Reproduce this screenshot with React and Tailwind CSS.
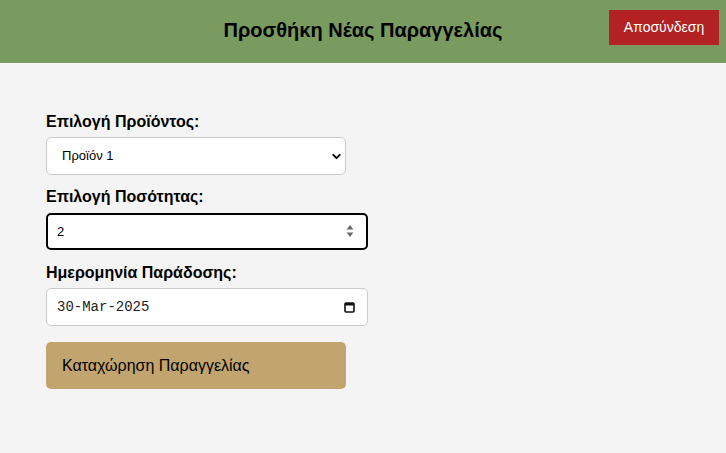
import React, { useState } from "react"
import { ChevronDown } from "lucide-react"

const font = { fontFamily: '"Liberation Sans", Arial, sans-serif' }

const App = () => {
  const [product, setProduct] = useState("1")
  const [qty, setQty] = useState("2")

  return (
    <div className="min-h-screen bg-[#f4f4f4] text-black" style={font}>
      <header className="grid h-[63px] grid-cols-[1fr_auto_1fr] items-start bg-[#7a9b5f]">
        <div />
        <h1 className="mt-[18px] text-[20px] font-bold leading-[24px]">Προσθήκη Νέας Παραγγελίας</h1>
        <div className="flex justify-end pr-[7px] pt-[10px]">
          <button className="h-[35px] w-[110px] bg-[#b22222] text-[14px] text-white">Αποσύνδεση</button>
        </div>
      </header>

      <form className="flex flex-col pl-[46px] pt-[50px]" onSubmit={(e) => e.preventDefault()}>
        <label className="text-[16px] font-bold leading-[18px]">Επιλογή Προϊόντος:</label>
        <div className="relative mt-[6px] w-[300px]">
          <select
            value={product}
            onChange={(e) => setProduct(e.target.value)}
            className="h-[38px] w-full appearance-none rounded-[5px] border border-[#cccccc] bg-white pl-[15px] text-[13px]"
          >
            <option value="1">Προϊόν 1</option>
            <option value="2">Προϊόν 2</option>
            <option value="3">Προϊόν 3</option>
          </select>
          <ChevronDown className="pointer-events-none absolute right-[3px] top-[13px] h-[13px] w-[13px]" strokeWidth={3.5} />
        </div>

        <label className="mt-[13px] text-[16px] font-bold leading-[18px]">Επιλογή Ποσότητας:</label>
        <div className="relative mt-[7px] w-[322px]">
          <input
            type="text"
            value={qty}
            onChange={(e) => setQty(e.target.value)}
            className="h-[37px] w-full rounded-[5px] border-2 border-black bg-white pl-[9px] text-[13px] outline-none"
          />
          <svg className="pointer-events-none absolute right-[14px] top-[11px]" width="8" height="14" viewBox="0 0 8 14">
            <path d="M4 1 L7.5 5.5 H0.5 Z" fill="#6b6b6b" />
            <path d="M4 13 L7.5 8.5 H0.5 Z" fill="#6b6b6b" />
          </svg>
        </div>

        <label className="mt-[14px] text-[16px] font-bold leading-[18px]">Ημερομηνία Παράδοσης:</label>
        <div className="relative mt-[6px] w-[322px]">
          <input
            type="text"
            readOnly
            value="30-Mar-2025"
            className="h-[38px] w-full rounded-[5px] border border-[#cccccc] bg-white pl-[10px] text-[14px] text-[#222] outline-none"
            style={{ fontFamily: '"Liberation Mono", "Courier New", monospace' }}
          />
          <svg className="pointer-events-none absolute right-[13px] top-[13px]" width="11" height="12" viewBox="0 0 11 12">
            <rect x="1" y="2" width="9" height="9" rx="1" fill="none" stroke="#111" strokeWidth="1.6" />
            <rect x="1" y="2" width="9" height="2.5" fill="#111" />
          </svg>
        </div>

        <button
          type="submit"
          className="mt-[16px] h-[47px] w-[300px] rounded-[5px] bg-[#c2a56e] pl-[16px] text-left text-[16px] text-black"
        >
          Καταχώρηση Παραγγελίας
        </button>
      </form>
    </div>
  )
}

export default App
